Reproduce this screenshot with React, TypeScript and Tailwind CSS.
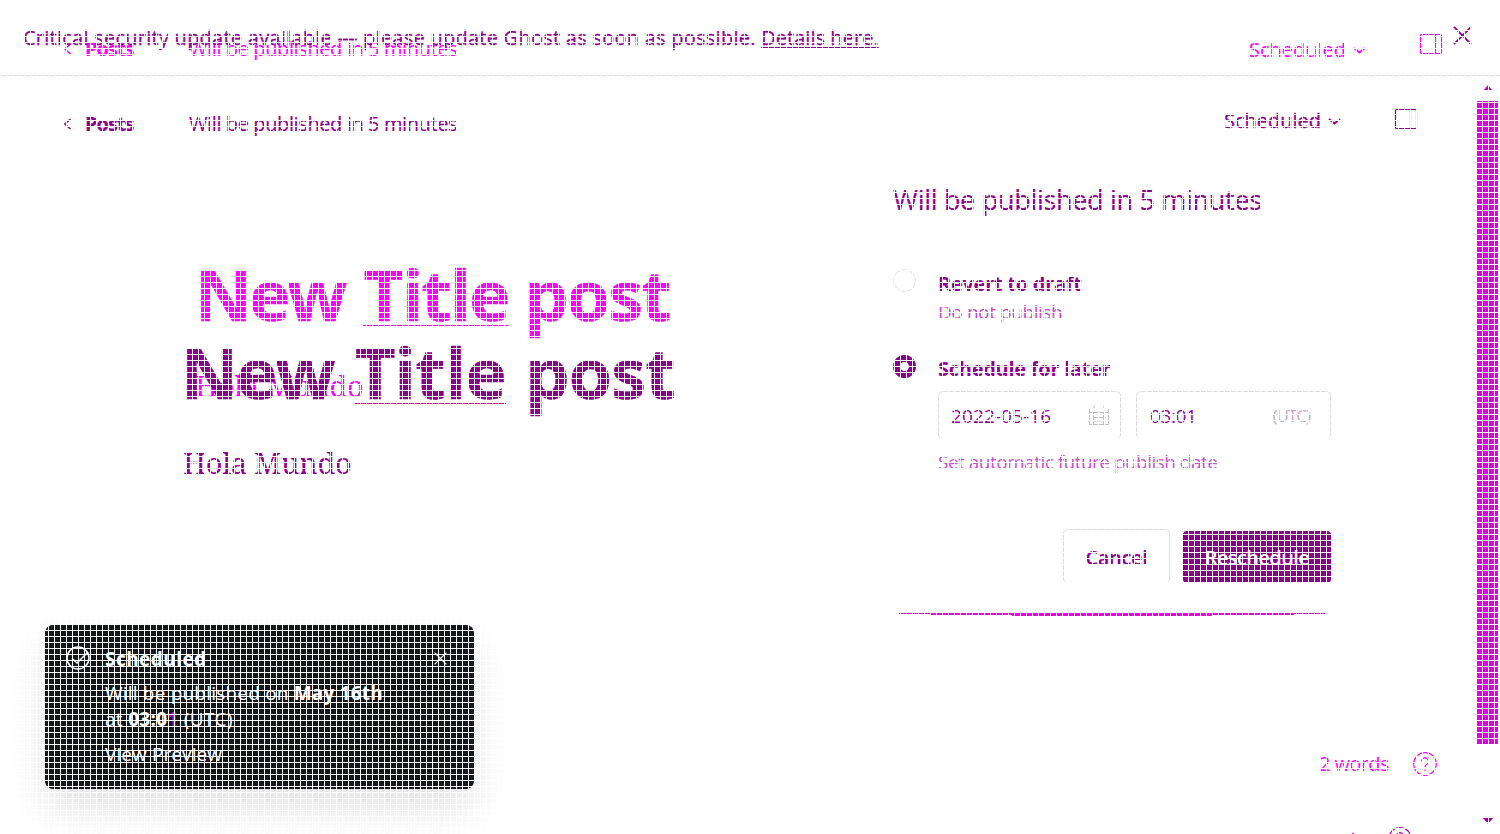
import React from "react";

const FONT = "font-['Open_Sans','Noto_Sans',sans-serif]";
const SERIF = "font-['Noto_Serif','Liberation_Serif',serif]";

function PanelIcon({ className }: { className: string }) {
  return (
    <svg width="24" height="22" viewBox="0 0 24 22" fill="none" stroke="currentColor" className={className}>
      <rect x="1.500" y="1.500" width="21" height="19" rx="1" strokeWidth="1.2" />
      <path d="M16.5 1v19.5" strokeWidth="1.2" />
    </svg>
  );
}

function Chevron() {
  return (
    <svg width="13" height="7" viewBox="0 0 13 7" fill="none" stroke="currentColor" strokeWidth="2">
      <path d="M1 1l5.500 4.500L12 1" />
    </svg>
  );
}

function Back() {
  return (
    <svg width="8" height="12" viewBox="0 0 8 12" fill="none" stroke="currentColor" strokeWidth="1.6">
      <path d="M6.500 1L1 6L6.500 11" />
    </svg>
  );
}

function Cross({ size, width }: { size: number; width: number }) {
  return (
    <svg width={size} height={size} viewBox="0 0 20 20" fill="none" stroke="currentColor" strokeWidth={width}>
      <path d="M1 1l18 18M19 1L1 19" />
    </svg>
  );
}

function Help() {
  return (
    <svg width="24" height="24" viewBox="0 0 24 24" fill="none" stroke="currentColor" strokeWidth="1.2">
      <circle cx="12" cy="12" r="11.3" />
      <path d="M8.500 9.200a3.500 3.500 0 1 1 5.300 3c-1.200.7-1.800 1.200-1.800 2.800M12 17.500v1.500" />
    </svg>
  );
}

function Breadcrumb() {
  return (
    <div className="flex items-center whitespace-nowrap text-[20px] leading-[28px] [-webkit-text-stroke:0.2px]">
      <Back />
      <span className="ml-[13px] w-[104px] font-bold tracking-[-1px]">Posts</span>
      <span className="tracking-[-0.39px]">Will be published in 5 minutes</span>
    </div>
  );
}

function EarlierView() {
  return (
    <div className="absolute inset-0 text-[#ff00ff]">
      <div className="flex h-[76px] items-start pl-[64px] pt-[35px]">
        <Breadcrumb />
        <div className="ml-auto mr-[53px] mt-[1px] flex items-center gap-[7px] text-[20px] leading-[28px] [-webkit-text-stroke:0.2px]">
          Scheduled <Chevron />
        </div>
        <PanelIcon className="mr-[57px] mt-[-2px]" />
      </div>
      <div className="pl-[195px] pt-[168px]">
        <h1 className="whitespace-nowrap text-[70px] font-bold leading-[100px] tracking-[-2px] [-webkit-text-stroke:0.5px]">
          <span className="mr-[3px] tracking-[-3px]">New</span> <span className="underline decoration-2 underline-offset-[3px] [text-decoration-skip-ink:none]">Title</span> post
        </h1>
        <p className={`${SERIF} mt-[22px] text-[29px] leading-[40px] tracking-[-0.3px]`}>Hola Mundo</p>
      </div>
      <div className="absolute left-[1319px] top-[750px] flex items-center text-[20px] leading-[28px] tracking-[-0.6px]">
        <span className="w-[94px]">2 words</span>
        <Help />
      </div>
    </div>
  );
}

function SchedulePanel() {
  return (
    <section className="w-[440px] text-[#92008f]">
      <h2 className="whitespace-nowrap text-[27px] leading-[36px] tracking-[-0.3px] [-webkit-text-stroke:0.2px]">Will be published in 5 minutes</h2>
      <div className="mt-[52px] flex">
        <span className="-mt-px h-[23px] w-[23px] shrink-0 rounded-full border border-[#dddddd]" />
        <div className="ml-[22px]">
          <div className="text-[20px] font-bold leading-[28px] tracking-[-0.26px]">Revert to draft</div>
          <div className="text-[19px] leading-[28px] tracking-[-0.42px] text-[#c848c8]">Do not publish</div>
        </div>
      </div>
      <div className="mt-[29px] flex">
        <span className="h-[23px] w-[23px] shrink-0 rounded-full border-[7px] border-[#8b008b]" />
        <div className="ml-[22px]">
          <div className="text-[20px] font-bold leading-[28px] tracking-[-0.26px]">Schedule for later</div>
          <div className="mt-[8px] flex gap-[15px]">
            <div className="flex h-[48px] w-[183px] items-center justify-between rounded-[5px] border border-b-0 border-[#dddddd] pl-[12px] pr-[11px] pt-[1px] text-[19px] tracking-[0.1px]">
              2022-05-16
              <svg className="-mt-[2px]" width="20" height="20" viewBox="0 0 20 20" fill="none" stroke="#c0c0c0">
                <path d="M.5 3.500h19v16H.5zM.5 7.500h19M4.500 8v11M9.500 8v11M14.500 8v11M3 12.500h14M3 16h14M5 0v4M15 0v4" />
              </svg>
            </div>
            <div className="flex h-[48px] w-[195px] items-center justify-between rounded-[5px] border border-b-0 border-[#dddddd] pl-[13px] pr-[20px] pt-[1px] text-[19px] tracking-[-0.4px]">
              03:01 <span className="text-[17px] tracking-[-1px] text-[#c0a8c0]">(UTC)</span>
            </div>
          </div>
          <div className="mt-[9px] text-[19px] leading-[28px] tracking-[-0.52px] text-[#c852c8]">Set automatic future publish date</div>
        </div>
      </div>
      <div className="mt-[53px] flex w-[438px] justify-end gap-[13px] text-[20px] font-semibold">
        <button className="h-[54px] w-[107px] rounded-[5px] border border-b-0 border-[#dddddd] pt-[3px] tracking-[-0.3px] [-webkit-text-stroke:0.2px]">Cancel</button>
        <button className="mt-[2px] h-[52px] w-[148px] rounded bg-[#8b008b] pt-[2px] tracking-[-0.6px] text-white">Reschedule</button>
      </div>
      <svg className="ml-[5px] mt-[30px]" width="430" height="5" viewBox="0 0 430 5" fill="#f000e8">
        <path d="M1 0h426v1h-31v1h-82v1H114v-1H32v-1H1z" />
      </svg>
    </section>
  );
}

function Toast() {
  return (
    <aside className="absolute left-[45px] top-[625px] flex h-[164px] w-[429px] rounded-lg bg-[#15171a] pl-[21px] pt-[20px] text-white shadow-[0_20px_40px_rgba(0,0,0,0.12)]">
      <svg className="mt-[1px]" width="24" height="24" viewBox="0 0 24 24" fill="none" stroke="currentColor" strokeWidth="1.5">
        <circle cx="12" cy="12" r="11" />
        <path d="M6 12.500l5 4.500L22 6" />
      </svg>
      <div className="ml-[15px] whitespace-nowrap text-[19px] leading-[26px] tracking-[0.2px]">
        <div className="font-bold leading-[28px] tracking-[0.45px]">Scheduled</div>
        <div className="mt-[7px]">Will be published on <b>May 16th</b></div>
        <div className="tracking-[0.3px]">at <b>03:0<span className="text-[#e000e0]">1</span></b> (UTC)</div>
        <div className="mt-[9px] tracking-[0.1px]">View Preview</div>
      </div>
      <div className="absolute right-[27px] top-[27px]"><Cross size={13} width={2} /></div>
    </aside>
  );
}

export default function App() {
  return (
    <main className={`relative h-[834px] w-[1500px] overflow-hidden bg-white ${FONT}`}>
      <EarlierView />
      <div className="relative flex h-full flex-col text-[#92008f]">
        <header className="flex h-[76px] shrink-0 items-start border-b border-[#dddddd] pl-[23px] pr-[28px] pt-[24px]">
          <p className="whitespace-nowrap text-[20px] leading-[28px] tracking-[0.25px] [-webkit-text-stroke:0.3px]">
            Critical security update available — please update Ghost as soon as possible.{" "}
            <span className="tracking-[0.05px] underline decoration-1 underline-offset-[2px]">Details here.</span>
          </p>
          <div className="ml-auto mt-[2px]"><Cross size={19} width={2} /></div>
        </header>
        <div className="flex min-h-0 flex-1">
          <div className="w-[893px] pl-[64px] pt-[34px]">
            <Breadcrumb />
            <div className="pl-[117px] pt-[184px]">
              <h1 className="whitespace-nowrap text-[70px] font-bold leading-[100px] tracking-[-0.8px] text-[#8b008b] [-webkit-text-stroke:0.5px]">
                <span className="mr-[4px] tracking-[-1.9px]">New</span> <span className="mr-[2px] underline decoration-[#ee0096] decoration-2 underline-offset-[3px] [text-decoration-skip-ink:none]">Title</span> post
              </h1>
              <p className={`${SERIF} ml-[2px] mt-[21px] text-[29px] leading-[40px] tracking-[-0.3px]`}>Hola Mundo</p>
            </div>
          </div>
          <div className="w-[584px]">
            <div className="flex h-[106px] items-start justify-end pr-[59px] pt-[31px] text-[20px] leading-[28px]">
              <div className="mr-[53px] flex items-center gap-[7px] [-webkit-text-stroke:0.4px]">Scheduled <Chevron /></div>
              <PanelIcon className="mt-[1px]" />
            </div>
            <SchedulePanel />
          </div>
          <div className="flex w-[21px] flex-col items-center">
            <svg className="mt-[9px] shrink-0" width="10" height="6" viewBox="0 0 10 6" fill="#c400c4"><path d="M5 0l5 6H0z" /></svg>
            <div className="mt-[10px] h-[643px] w-[21px] shrink-0 bg-[#e000e0]" />
            <svg className="mt-[74px] shrink-0" width="10" height="6" viewBox="0 0 10 6" fill="#9c009c"><path d="M0 0h10L5 6z" /></svg>
          </div>
        </div>
      </div>
      <div className="absolute left-[1294px] top-[827px] flex items-start text-[20px] leading-[28px] tracking-[-0.6px] text-[#b000b0]">
        <span className="w-[94px]">2 words</span>
        <Help />
      </div>
      <Toast />
      <div className="pointer-events-none absolute inset-0 bg-[linear-gradient(to_right,white_1px,transparent_1px),linear-gradient(to_bottom,white_1px,transparent_1px)] bg-[size:6px_6px]" />
    </main>
  );
}
